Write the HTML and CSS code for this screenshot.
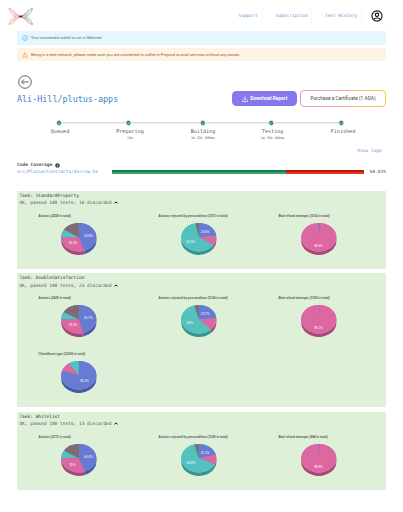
FILE: index.html
```html
<!DOCTYPE html>
<html lang="en">
<head>
<meta charset="utf-8">
<title>Ali-Hill/plutus-apps</title>
<link rel="stylesheet" href="styles.css">
</head>
<body>
<header class="header">
  <svg class="logo" width="26" height="18" viewBox="0 0 26 18" fill="none" stroke-width=".4">
    <g stroke="#f08a80">
      <path d="M13 8.500C9 8 8 1.500 1.500 1M13 8.500C9 9 8 15.500 1.500 16M12 8C8 7 7 4 2 3M12 9C8 10 7 13 2 14M11 8C8 7 7 6 3.500 5M11 9C8 10 7 11 3.500 12M10 8.300L5 7M10 8.800L5 10.200M1.500 1C2 5 4 8 8 8.500M1.500 16C2 12 4 9 8 8.500M4 1.500C6 5 8 7 12 8M4 15.500C6 12 8 10 12 9"/>
      <path d="M.8 1h1.400M.8 16h1.400" stroke-width="1.300"/>
    </g>
    <g stroke="#8b8b8b" transform="translate(25.500 0) scale(-1 1)">
      <path d="M13 8.500C9 8 8 1.500 1.500 1M13 8.500C9 9 8 15.500 1.500 16M12 8C8 7 7 4 2 3M12 9C8 10 7 13 2 14M11 8C8 7 7 6 3.500 5M11 9C8 10 7 11 3.500 12M10 8.300L5 7M10 8.800L5 10.200M1.500 1C2 5 4 8 8 8.500M1.500 16C2 12 4 9 8 8.500M4 1.500C6 5 8 7 12 8M4 15.500C6 12 8 10 12 9"/>
      <path d="M.8 1h1.400M.8 16h1.400" stroke-width="1.300"/>
    </g>
    <path d="M10.500 8.500h2" stroke="#e02020" stroke-width="1.400"/><path d="M12.300 8.500h2" stroke="#222" stroke-width="1.800"/>
  </svg>
  <nav class="nav"><a>Support</a><a>Subscription</a><a>Test History</a></nav>
  <svg class="avatar" width="12" height="12" viewBox="0 0 12 12" fill="none" stroke="#111" stroke-width="1.100">
    <circle cx="6" cy="6" r="5.100"/><circle cx="6" cy="4.800" r="1.700"/><path d="M2.600 9.400C4 7.500 8 7.500 9.400 9.400"/>
  </svg>
</header>
<main class="main">
  <div class="alert info">
    <svg width="6" height="6" viewBox="0 0 6 6" fill="none" stroke="#35aee8" stroke-width=".55"><circle cx="3" cy="3" r="2.500"/><path d="M3 2.700v1.700M3 1.500v.6"/></svg>
    <span>Your connected wallet is not in Mainnet.</span>
  </div>
  <div class="alert warning">
    <svg width="6" height="6" viewBox="0 0 6 6" fill="none" stroke="#fb9a2c" stroke-width=".6"><path d="M3 .7L5.600 5.200H.4zM3 2.200v1.500M3 4.100v.5"/></svg>
    <span>Being in a test network, please make sure you are connected to wallet in Preprod to avail services without any issues.</span>
  </div>
  <svg class="back" width="14" height="14" viewBox="0 0 14 14" fill="none" stroke="#222" stroke-width=".7"><circle cx="7" cy="7" r="6.300"/><path d="M10.700 7H3.700M6 4.500L3.500 7L6 9.500"/></svg>
  <div class="title-row">
    <h1>Ali-Hill/plutus-apps</h1>
    <button class="download">
      <svg width="6" height="6" viewBox="0 0 6 6" fill="none" stroke="#fff" stroke-width=".7"><path d="M3 .2v3.700M1.500 2.500L3 4L4.500 2.500M.4 3.800v1.700h5.200V3.800"/></svg>
      <span>Download Report</span>
    </button>
    <button class="purchase">Purchase a Certificate (1 ADA)</button>
  </div>
  <svg class="track" width="369" height="6" viewBox="17 0 369 6">
    <path d="M59 2.800H341" stroke="#dedede" stroke-width="1.400"/>
    <g fill="#0d8050" stroke="#fff" stroke-width=".5">
      <circle cx="59" cy="3" r="2.400"/><circle cx="128.500" cy="3" r="2.400"/><circle cx="202.800" cy="3" r="2.400"/><circle cx="271.300" cy="3" r="2.400"/><circle cx="341.300" cy="3" r="2.400"/>
    </g>
    <path d="M57.900 3l.8.8 1.500-1.600M127.400 3l.8.8 1.500-1.600M201.700 3l.8.8 1.500-1.600M270.200 3l.8.8 1.500-1.600M340.200 3l.8.8 1.500-1.600" stroke="#fff" stroke-width=".7" fill="none"/>
  </svg>
  <div class="steps">
    <div>Queued</div><div>Preparing<small>14s</small></div><div>Building<small>1m 22s 899ms</small></div><div>Testing<small>1m 18s 406ms</small></div><div>Finished</div>
  </div>
  <a class="logs">View logs</a>
  <div class="coverage-title">Code Coverage
    <svg width="5" height="5" viewBox="0 0 5 5"><circle cx="2.500" cy="2.500" r="2.300" fill="#444"/><path d="M2.500 2.200v1.600M2.500 1.100v.6" stroke="#eee" stroke-width=".6"/></svg>
  </div>
  <div class="coverage">
    <a>src/Plutus/Contracts/Escrow.hs</a>
    <div class="bar"><div class="covered"></div></div>
    <span>68.83%</span>
  </div>
  <div id="tasks"></div>
</main>
<script src="charts.js"></script>
</body>
</html>
```
FILE: styles.css
```css
* { box-sizing: border-box; }
body { margin: 0; background: #fff; color: #555; font-family: "DejaVu Sans Mono", monospace; font-size: 4.5px; line-height: 6px; overflow: hidden; }
svg { display: block; flex: none; }
a { color: #6596d0; white-space: nowrap; }
.header { height: 31.4px; padding-left: 8px; display: flex; }
.logo { margin-top: 8px; }
.nav { flex: none; margin-left: 187.2px; padding-top: 8px; display: flex; font-size: 4.53px; }
.nav a { height: 16px; line-height: 16px; padding-left: 12.3px; border-right: 1px solid #f7f7f7; }
.nav a:first-child { width: 42.2px; padding-left: 17.400px; }
.nav a:nth-child(2) { width: 49px; }
.nav a:nth-child(3) { width: 50px; }
.avatar { margin: 10px 0 0 8.500px; }
.main { margin-left: 17px; width: 369px; }
.alert { height: 13.3px; display: flex; align-items: center; padding-left: 4.500px; gap: 3.400px; border-radius: 1px; font-family: Roboto, sans-serif; font-size: 4.05px; white-space: nowrap; }
.info { background: #e5f6fd; color: #55727c; margin-bottom: 3.200px; }
.warning { background: #fff3e3; color: #80684f; }
.back { margin: 14px 0 0 1.300px; }
.title-row { height: 16.500px; margin-top: 1.300px; display: flex; align-items: center; }
h1 { margin: 0 auto 0 0; color: #3d83c8; font-size: 8.42px; font-weight: 400; line-height: 10px; }
button { font: 4px Roboto, sans-serif; padding: 0; white-space: nowrap; }
.download { width: 65px; height: 14.700px; border: 0; border-radius: 4.500px; background: #8578ec; color: #fff; font-weight: 700; font-size: 4.8px; display: flex; align-items: center; justify-content: center; gap: 2.500px; }
.purchase { width: 86px; height: 16.500px; margin-left: 3px; border: 1px solid transparent; border-radius: 4.500px; background: linear-gradient(#fff, #fff) padding-box, linear-gradient(90deg, #e496dc, #f5aaa0 50%, #fac84a) border-box; color: #444; font-size: 4.84px; font-weight: 400; }
.track { margin-top: 13.200px; }
.steps { margin-left: 8px; display: grid; grid-template-columns: 70px 70px 76px 63.4px 77.2px; height: 21.4px; padding-top: 2.300px; text-align: center; font-size: 5.1px; }
.steps small { display: block; font-size: 3.300px; line-height: 8px; }
.logs { display: block; margin-left: 340.2px; font-size: 4.53px; }
.coverage-title { display: flex; align-items: center; gap: 2.500px; margin-top: 8.500px; font-weight: 700; font-size: 4.5px; }
.coverage { display: flex; align-items: center; height: 7px; margin-top: .5px; }
.coverage a { width: 95px; }
.bar { width: 252px; height: 4px; background: linear-gradient(#cc1010 50%, #dd3a20 50%); }
.covered { width: 69.2%; height: 100%; background: linear-gradient(#0d8050 50%, #449d6e 50%); }
.coverage span { margin-left: auto; }
#tasks { display: flex; flex-direction: column; gap: 4.600px; margin-top: 15.500px; }
.task { background: #dff0d8; border-radius: 1px; padding: 1px 0 2.700px 2.400px; }
.task p { margin: 0; height: 7.300px; line-height: 7.300px; }
.task .name { color: #333; }
.task .result { display: flex; align-items: center; gap: 2.500px; }
.charts { display: grid; grid-template-columns: repeat(3, 120.200px); margin: 3.400px 0 0 -2.400px; }
.chart { font-family: "Liberation Sans", sans-serif; }
.chart .heading { font-size: 3.200px; font-weight: 700; fill: #555; }
.chart .value { font-size: 3.100px; fill: #fff; text-anchor: middle; }
```
FILE: charts.js
```js
const COLORS = [['#667bd1', '#455aa8'], ['#dc67a1', '#a9477b'], ['#53c2bf', '#369390'], ['#7d6d72', '#5d5054']];
const TASKS = [
  { name: 'StandardProperty', discarded: 16, charts: [
    { title: 'Actions (2258 in total)', w: 32.3, parts: [44.9, 30.3, 8.8, 16], labels: [['44.9%', 71.4, 26.3], ['30.3%', 56, 33.3]] },
    { title: 'Actions rejected by precondition (1072 in total)', w: 69, parts: [23.6, 11, 62.3, 3.1], labels: [['23.6%', 68.2, 21.8], ['62.3%', 53.8, 31.6]] },
    { title: 'Bad refund attempts (1014 in total)', w: 51, parts: [1.4, 98.6], labels: [['98.6%', 61.500, 35.800]] } ] },
  { name: 'DoubleSatisfaction', discarded: 23, charts: [
    { title: 'Actions (2429 in total)', w: 32.3, parts: [45.7, 29.3, 8.500, 16.5], labels: [['45.7%', 71.4, 26.3], ['29.3%', 56, 33.3]] },
    { title: 'Actions rejected by precondition (1134 in total)', w: 69, parts: [23.7, 14.3, 58, 4], labels: [['23.7%', 68.2, 21.8], ['58%', 52.8, 31.4]] },
    { title: 'Bad refund attempts (1105 in total)', w: 51, parts: [.8, 99.2], labels: [['99.2%', 61.500, 35.800]] },
    { title: 'ChainEvent type (10000 in total)', w: 46.500, parts: [80.2, 10.300, 9.500], labels: [['80.2%', 67.5, 32.8]] } ] },
  { name: 'Whitelist', discarded: 13, charts: [
    { title: 'Actions (2172 in total)', w: 32.3, parts: [44.4, 31, 8.800, 15.8], labels: [['44.4%', 71.4, 26.3], ['31%', 55.5, 33.8]] },
    { title: 'Actions rejected by precondition (1038 in total)', w: 69, parts: [21.1, 10.900, 63.8, 4.2], labels: [['21.1%', 68, 21.8], ['63.8%', 54.2, 31.8]] },
    { title: 'Bad refund attempts (984 in total)', w: 49, parts: [1.2, 98.8], labels: [['98.8%', 61.500, 35.800]] } ] },
];
const CX = 61.8, CY = 27.2, RX = 17.6, RY = 14.2, DEPTH = 3.5;
const point = (f, dy = 0) => {
  const a = f * 2 * Math.PI;
  return `${(CX + RX * Math.sin(a)).toFixed(2)} ${(CY - RY * Math.cos(a) + dy).toFixed(2)}`;
};

function chart(c) {
  let start = 0, side = '', top = '';
  // The largest slice's colour sits under the face so seams between slices stay closed.
  const base = COLORS[c.parts.indexOf(Math.max(...c.parts))][0];
  c.parts.forEach((part, i) => {
    const end = start + part / 100;
    const s = Math.max(start, .25), e = Math.min(end, .75);
    if (e > s) side += `<path fill="${COLORS[i][1]}" d="M${point(s)}A${RX} ${RY} 0 0 1 ${point(e)}L${point(e, DEPTH)}A${RX} ${RY} 0 0 0 ${point(s, DEPTH)}Z"/>`;
    top += `<path fill="${COLORS[i][0]}" d="M${CX} ${CY}L${point(start)}A${RX} ${RY} 0 ${end - start > .5 ? 1 : 0} 1 ${point(end)}Z"/>`;
    start = end;
  });
  const labels = c.labels.map(([t, x, y]) => `<text class="value" x="${x}" y="${y + 1.1}">${t}</text>`).join('');
  return `<svg class="chart" width="120.2" height="56.1" viewBox="0 0 120.2 56.1"><text class="heading" x="21.6" y="7.4" textLength="${c.w}" lengthAdjust="spacingAndGlyphs">${c.title}</text>${side}<ellipse cx="${CX}" cy="${CY}" rx="${RX}" ry="${RY}" fill="${base}"/>${top}${labels}</svg>`;
}

document.getElementById('tasks').innerHTML = TASKS.map(t => `<section class="task">
  <p class="name">Task: ${t.name}</p>
  <p class="result"><span>OK, passed 100 tests; ${t.discarded} discarded</span><svg width="4" height="3" viewBox="0 0 4 3"><path d="M.5 2.400L2 .9L3.500 2.400" fill="none" stroke="#111" stroke-width="1"/></svg></p>
  <div class="charts">${t.charts.map(chart).join('')}</div></section>`).join('');
```
